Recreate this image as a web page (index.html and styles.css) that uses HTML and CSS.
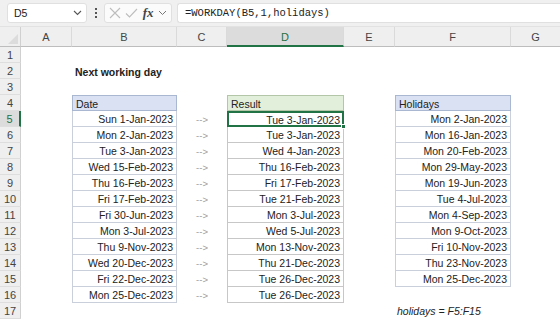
FILE: index.html
```html
<!DOCTYPE html>
<html>
<head>
<meta charset="utf-8">
<link rel="stylesheet" href="styles.css">
</head>
<body>
<div class="app">
  <div class="toolbar">
    <div class="namebox"><span>D5</span>
      <svg class="chev" width="9" height="6" viewBox="0 0 9 6"><path d="M1 1 L4.5 4.5 L8 1" fill="none" stroke="#555" stroke-width="1.1"/></svg>
    </div>
    <div class="vdots"><i></i><i></i><i></i></div>
    <div class="fxbox">
      <svg width="12" height="12" viewBox="0 0 12 12"><path d="M1 1 L11 11 M11 1 L1 11" stroke="#bdbdbd" stroke-width="1.1"/></svg>
      <svg width="13" height="12" viewBox="0 0 13 12"><path d="M1 6.5 L4.5 10 L12 2" fill="none" stroke="#bdbdbd" stroke-width="1.1"/></svg>
      <span class="fx">fx</span>
      <svg class="chev" width="9" height="6" viewBox="0 0 9 6"><path d="M1 1 L4.5 4.5 L8 1" fill="none" stroke="#777" stroke-width="1"/></svg>
    </div>
    <div class="formula">=WORKDAY(B5,1,holidays)</div>
  </div>
  <div class="sheet">
    <div class="corner"><span class="tri"></span></div>
    <div class="ch">A</div>
    <div class="ch">B</div>
    <div class="ch">C</div>
    <div class="ch sel">D</div>
    <div class="ch">E</div>
    <div class="ch">F</div>
    <div class="ch last">G</div>

    <div class="rh" style="grid-row:2">1</div>
    <div class="rh" style="grid-row:3">2</div>
    <div class="rh" style="grid-row:4">3</div>
    <div class="rh" style="grid-row:5">4</div>
    <div class="rh sel" style="grid-row:6">5</div>
    <div class="rh" style="grid-row:7">6</div>
    <div class="rh" style="grid-row:8">7</div>
    <div class="rh" style="grid-row:9">8</div>
    <div class="rh" style="grid-row:10">9</div>
    <div class="rh" style="grid-row:11">10</div>
    <div class="rh" style="grid-row:12">11</div>
    <div class="rh" style="grid-row:13">12</div>
    <div class="rh" style="grid-row:14">13</div>
    <div class="rh" style="grid-row:15">14</div>
    <div class="rh" style="grid-row:16">15</div>
    <div class="rh" style="grid-row:17">16</div>
    <div class="rh" style="grid-row:18">17</div>

    <div class="title">Next working day</div>

    <div class="col colB">
      <div class="hd blue">Date</div>
      <div class="c bb">Sun 1-Jan-2023</div>
      <div class="c bb">Mon 2-Jan-2023</div>
      <div class="c bb">Tue 3-Jan-2023</div>
      <div class="c bb">Wed 15-Feb-2023</div>
      <div class="c bb">Thu 16-Feb-2023</div>
      <div class="c bb">Fri 17-Feb-2023</div>
      <div class="c bb">Fri 30-Jun-2023</div>
      <div class="c bb">Mon 3-Jul-2023</div>
      <div class="c bb">Thu 9-Nov-2023</div>
      <div class="c bb">Wed 20-Dec-2023</div>
      <div class="c bb">Fri 22-Dec-2023</div>
      <div class="c bb">Mon 25-Dec-2023</div>
    </div>

    <div class="col colC">
      <div class="arr">--&gt;</div><div class="arr">--&gt;</div><div class="arr">--&gt;</div>
      <div class="arr">--&gt;</div><div class="arr">--&gt;</div><div class="arr">--&gt;</div>
      <div class="arr">--&gt;</div><div class="arr">--&gt;</div><div class="arr">--&gt;</div>
      <div class="arr">--&gt;</div><div class="arr">--&gt;</div><div class="arr">--&gt;</div>
    </div>

    <div class="col colD">
      <div class="hd green">Result</div>
      <div class="c bg active">Tue 3-Jan-2023<span class="handle"></span></div>
      <div class="c bg">Tue 3-Jan-2023</div>
      <div class="c bg">Wed 4-Jan-2023</div>
      <div class="c bg">Thu 16-Feb-2023</div>
      <div class="c bg">Fri 17-Feb-2023</div>
      <div class="c bg">Tue 21-Feb-2023</div>
      <div class="c bg">Mon 3-Jul-2023</div>
      <div class="c bg">Wed 5-Jul-2023</div>
      <div class="c bg">Mon 13-Nov-2023</div>
      <div class="c bg">Thu 21-Dec-2023</div>
      <div class="c bg">Tue 26-Dec-2023</div>
      <div class="c bg">Tue 26-Dec-2023</div>
    </div>

    <div class="col colF">
      <div class="hd blue">Holidays</div>
      <div class="c bb">Mon 2-Jan-2023</div>
      <div class="c bb">Mon 16-Jan-2023</div>
      <div class="c bb">Mon 20-Feb-2023</div>
      <div class="c bb">Mon 29-May-2023</div>
      <div class="c bb">Mon 19-Jun-2023</div>
      <div class="c bb">Tue 4-Jul-2023</div>
      <div class="c bb">Mon 4-Sep-2023</div>
      <div class="c bb">Mon 9-Oct-2023</div>
      <div class="c bb">Fri 10-Nov-2023</div>
      <div class="c bb">Thu 23-Nov-2023</div>
      <div class="c bb">Mon 25-Dec-2023</div>
    </div>

    <div class="note">holidays = F5:F15</div>
  </div>
</div>
</body>
</html>
```

FILE: styles.css
```css
* { box-sizing: border-box; }
html, body { margin: 0; padding: 0; background: #fff; }
body {
  width: 560px; height: 320px; overflow: hidden;
  font-family: "Liberation Sans", Arial, sans-serif;
  font-size: 10.5px; color: #222;
}
.toolbar {
  height: 27px; background: #f0f0f0;
  border-bottom: 1px solid #e2e2e2;
  display: flex; align-items: center;
  padding: 0 0 0 7px;
}
.namebox {
  width: 80px; height: 20px; background: #fff;
  border: 1px solid #e0e0e0; border-radius: 3px;
  display: flex; align-items: center; justify-content: space-between;
  padding: 0 4px 0 6px; font-size: 10.5px; color: #222;
}
.vdots {
  width: 17px; display: flex; flex-direction: column; align-items: center; gap: 2px;
}
.vdots i { display: block; width: 2px; height: 2px; background: #555; }
.fxbox {
  width: 68px; height: 20px; background: #fbfbfb;
  border: 1px solid #e0e0e0; border-radius: 3px;
  display: flex; align-items: center; justify-content: space-between;
  padding: 0 4px;
}
.fx {
  font-family: "Liberation Serif", "Times New Roman", serif;
  font-style: italic; font-weight: bold; font-size: 13px; color: #444;
}
.formula {
  margin-left: 5px; flex: 1; height: 20px; background: #fff;
  border: 1px solid #e0e0e0; border-right: none; border-radius: 3px 0 0 3px;
  font-family: "Liberation Mono", "Courier New", monospace;
  font-size: 10.5px; color: #222;
  display: flex; align-items: center; padding-left: 7px;
}
.sheet {
  display: grid;
  grid-template-columns: 21px 51px 105px 50px 117px 51px 116px 49px;
  grid-template-rows: 20px repeat(17, 16px);
}
.corner {
  grid-row: 1; grid-column: 1; background: #efefef;
  border-right: 1px solid #d0d0d0; border-bottom: 1px solid #bdbdbd;
  position: relative;
}
.tri {
  position: absolute; right: 2px; bottom: 2px; width: 0; height: 0;
  border-left: 10px solid transparent; border-bottom: 10px solid #dcdcdc;
}
.ch {
  grid-row: 1; background: #efefef; color: #444;
  border-right: 1px solid #dadada; border-bottom: 1px solid #bdbdbd;
  display: flex; align-items: center; justify-content: center;
  font-size: 11px; padding-top: 1px;
}
.ch.last { border-right: none; }
.ch.sel {
  background: #dcdcdc; color: #1e7145; border-bottom: 2px solid #217346;
  padding-top: 2px;
}
.rh {
  grid-column: 1; background: #efefef; color: #444;
  border-right: 1px solid #d0d0d0; border-bottom: 1px solid #dedede;
  display: flex; align-items: center; justify-content: center;
  font-size: 11px;
}
.rh.sel { background: #dcdcdc; color: #1e7145; border-right: 2px solid #217346; }
.title {
  grid-row: 3; grid-column: 3 / span 2;
  font-weight: bold; padding-left: 3px;
  display: flex; align-items: center; padding-top: 1px;
}
.col { grid-row: 5 / span 13; display: flex; flex-direction: column; }
.colB { grid-column: 3; }
.colC { grid-column: 4; grid-row: 6 / span 12; }
.colD { grid-column: 5; }
.colF { grid-column: 7; }
.hd, .c { height: 16px; flex-shrink: 0; display: flex; align-items: center; }
.hd { padding-left: 3px; padding-top: 1px; }
.blue { background: #d9e1f2; border: 1px solid #a9b7d1; }
.green { background: #e2efda; border: 1px solid #b3c7a8; }
.c { justify-content: flex-end; padding-right: 3px; padding-top: 1px; }
.bb { border: 1px solid #c9d0db; border-top: none; }
.bg { border: 1px solid #c7c7c7; border-top: none; }
.active { position: relative; border: 2px solid #217346; padding-right: 2px; }
.handle {
  position: absolute; right: -4px; bottom: -4px; width: 5px; height: 5px;
  background: #217346; border: 1px solid #fff;
}
.arr {
  height: 16px; flex-shrink: 0; display: flex; align-items: center; justify-content: center;
  color: #9a9a9a; font-size: 9.5px;
}
.note {
  grid-row: 18; grid-column: 7 / span 2;
  font-style: italic; padding-left: 2px;
  display: flex; align-items: center;
}
```
